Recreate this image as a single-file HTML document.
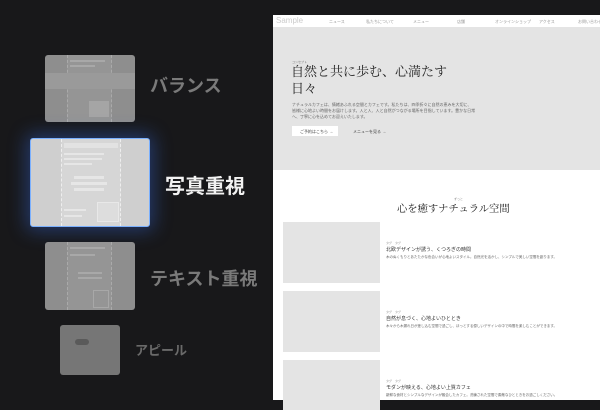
<!DOCTYPE html>
<html><head><meta charset="utf-8"><style>
*{margin:0;padding:0;box-sizing:border-box}
body{width:600px;height:400px;background:#18181a;position:relative;overflow:hidden;font-family:"Liberation Sans","Noto Sans CJK JP",sans-serif}
.card{position:absolute;background:#8e8e8e;border-radius:3px;overflow:hidden}
.card .c{position:absolute;top:0;bottom:0;border-left:1px dashed #aaa;border-right:1px dashed #aaa;background:#959595}
.card .b{position:absolute;background:#a8a8a8;height:2px}
.lbl{position:absolute;color:#7a7a7a;font-weight:bold;white-space:nowrap}
.r{position:absolute;left:273px;top:15px;width:327px;height:385px;background:#fff}
.serif{font-family:"Liberation Serif","Noto Serif CJK SC",serif}
.t{position:absolute;white-space:nowrap}
.img{position:absolute;left:10px;width:97px;background:#e4e4e4}
</style></head><body>
<div class="card" style="left:45px;top:55px;width:90px;height:67px">
<div class="c" style="left:22px;width:45px"></div>
<div style="position:absolute;left:0;right:0;top:18px;height:16px;background:#9a9a9a"></div>
<div class="b" style="left:25px;top:5px;width:35px"></div>
<div class="b" style="left:25px;top:10px;width:25px"></div>
<div style="position:absolute;left:44px;top:46px;width:20px;height:16px;background:#a5a5a5"></div>
</div>
<div class="lbl" style="left:150px;top:72px;font-size:18px">バランス</div>
<div class="card" style="left:30px;top:138px;width:120px;height:89px;background:#cfcfcf;border:1.5px solid #7ab0ff;box-shadow:0 0 18px 4px rgba(60,120,255,.35)">
<div class="c" style="left:30px;width:60px;background:#d6d6d6;border-color:#eee"></div>
<div class="b" style="left:33px;top:4px;width:54px;height:5px;background:#e2e2e2"></div>
<div class="b" style="left:33px;top:14px;width:40px;background:#e6e6e6"></div>
<div class="b" style="left:33px;top:19px;width:38px;background:#e6e6e6"></div>
<div class="b" style="left:33px;top:24px;width:28px;background:#e6e6e6"></div>
<div class="b" style="left:43px;top:37px;width:30px;height:3px;background:#e6e6e6"></div>
<div class="b" style="left:40px;top:43px;width:36px;height:3px;background:#e6e6e6"></div>
<div class="b" style="left:43px;top:49px;width:30px;height:3px;background:#e6e6e6"></div>
<div class="b" style="left:33px;top:70px;width:22px;background:#e6e6e6"></div>
<div class="b" style="left:33px;top:76px;width:18px;background:#e6e6e6"></div>
<div style="position:absolute;left:66px;top:63px;width:22px;height:20px;background:#ddd;border:1px solid #e8e8e8"></div>
</div>
<div class="lbl" style="left:165px;top:170px;font-size:20px;color:#f2f2f2">写真重視</div>
<div class="card" style="left:45px;top:242px;width:90px;height:68px">
<div class="c" style="left:22px;width:45px"></div>
<div class="b" style="left:25px;top:5px;width:35px"></div>
<div class="b" style="left:25px;top:12px;width:25px"></div>
<div class="b" style="left:33px;top:30px;width:24px"></div>
<div class="b" style="left:33px;top:35px;width:24px"></div>
<div style="position:absolute;left:48px;top:48px;width:16px;height:18px;border:1px solid #a8a8a8"></div>
</div>
<div class="lbl" style="left:150px;top:265px;font-size:18px">テキスト重視</div>
<div class="card" style="left:60px;top:325px;width:60px;height:50px;background:#767676">
<div style="position:absolute;left:15px;top:14px;width:14px;height:6px;background:#5a5a5a;border-radius:3px"></div>
</div>
<div class="lbl" style="left:135px;top:340px;font-size:13px;color:#6a6a6a">アピール</div>
<div class="r">
<div style="position:absolute;left:0;top:0;width:327px;height:12px;background:#fff;font-size:4px;color:#999">
<span class="t" style="left:3px;top:1px;font-size:8px;color:#ccc">Sample</span>
<span class="t" style="left:56px;top:4px">ニュース</span><span class="t" style="left:93px;top:4px">私たちについて</span><span class="t" style="left:140px;top:4px">メニュー</span><span class="t" style="left:184px;top:4px">店舗</span><span class="t" style="left:222px;top:4px">オンラインショップ</span><span class="t" style="left:266px;top:4px">アクセス</span><span class="t" style="left:305px;top:4px">お問い合わせ</span>
</div>
<div style="position:absolute;left:0;top:12px;width:327px;height:143px;background:#e4e4e4">
<div class="t" style="left:19px;top:33px;font-size:3px;color:#777">コンセプト</div>
<div class="t serif" style="left:18px;top:36px;font-size:13px;line-height:17px;color:#222">自然と共に歩む、心満たす<br>日々</div>
<div class="t" style="left:19px;top:75px;font-size:4px;line-height:6px;color:#666">ナチュラルカフェは、情緒あふれる空間とカフェです。私たちは、四季折々に自然の恵みを大切に、<br>皆様に心地よい時間をお届けします。人と人、人と自然がつながる場所を目指しています。豊かな日常<br>へ、丁寧に心を込めてお迎えいたします。</div>
<div style="position:absolute;left:19px;top:99px;width:46px;height:10px;background:#fff;font-size:4px;color:#444;padding:3px 0 0 8px">ご予約はこちら →</div>
<div class="t" style="left:80px;top:102px;font-size:4px;color:#444">メニューを見る →</div>
</div>
<div class="t" style="left:181px;top:182px;font-size:3px;color:#888">ずっと</div>
<div class="t serif" style="left:124px;top:185px;font-size:10.3px;color:#222">心を癒すナチュラル空間</div>
<div class="img" style="top:207px;height:61px"></div>
<div class="img" style="top:276px;height:61px"></div>
<div class="img" style="top:345px;height:50px"></div>
<div class="t" style="left:113px;top:226px;font-size:3px;color:#999">タグ　タグ</div>
<div class="t" style="left:113px;top:231px;font-size:5px;color:#333">北欧デザインが誘う、くつろぎの時間</div>
<div class="t" style="left:113px;top:240px;font-size:3.5px;color:#666">木のぬくもりとあたたかな色合いが心地よいスタイル。自然光を活かし、シンプルで美しい空間を創ります。</div>
<div class="t" style="left:113px;top:295px;font-size:3px;color:#999">タグ　タグ</div>
<div class="t" style="left:113px;top:300px;font-size:5px;color:#333">自然が息づく、心地よいひととき</div>
<div class="t" style="left:113px;top:309px;font-size:3.5px;color:#666">木々から木漏れ日が差し込む空間で過ごし、ほっとする優しいデザインの中で時間を楽しむことができます。</div>
<div class="t" style="left:113px;top:364px;font-size:3px;color:#999">タグ　タグ</div>
<div class="t" style="left:113px;top:369px;font-size:5px;color:#333">モダンが映える、心地よい上質カフェ</div>
<div class="t" style="left:113px;top:378px;font-size:3.5px;color:#666">新鮮な食材とシンプルなデザインが融合したカフェ。洗練された空間で素敵なひとときをお過ごしください。</div>
</div>
</body></html>
